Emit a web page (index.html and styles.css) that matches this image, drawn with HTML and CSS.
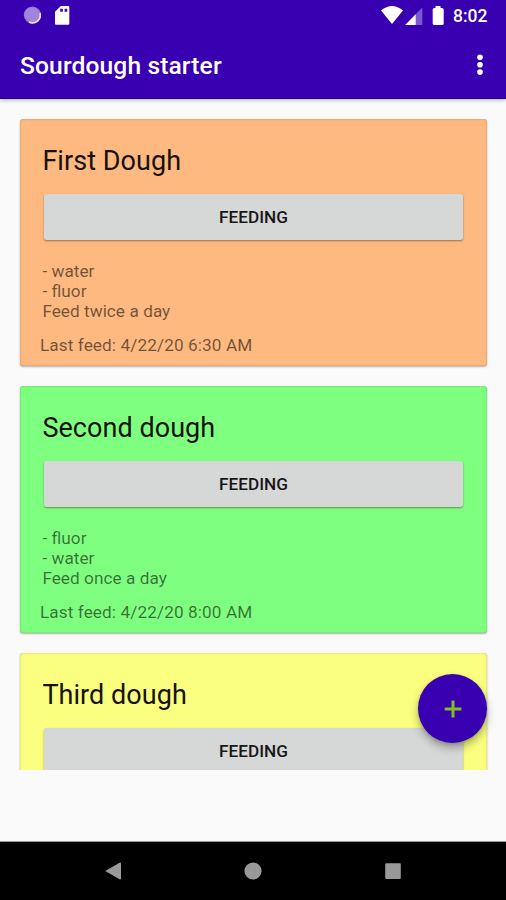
FILE: index.html
```html
<!DOCTYPE html>
<html lang="en">
<head>
<meta charset="utf-8">
<title>Sourdough starter</title>
<link rel="stylesheet" href="styles.css">
</head>
<body>
<div class="screen">
  <header class="header">
    <div class="status">
      <svg class="status-left" width="60" height="32" viewBox="0 0 60 32">
        <circle cx="12.4" cy="15" r="8.6" fill="#9a79d8"/>
        <circle cx="12" cy="14.6" r="7" fill="#a384dc"/>
        <path d="M20 13A7.8 7.8 0 0 1 9 22" fill="none" stroke="#eee4fb" stroke-width="1.7"/>
        <path fill-rule="evenodd" d="M40.8 6H48Q49.3 6 49.3 7.3V23.5Q49.3 24.8 48 24.8H36.3Q35 24.8 35 23.5V11.8ZM40.2 8.7V11.8H42.8V8.7ZM44.6 8.7V11.8H47.2V8.7Z" fill="#fff"/>
      </svg>
      <svg class="status-right" width="66" height="32" viewBox="0 0 66 32">
        <path d="M1 10.5Q12 1.5 23 10.5L12 24Z" fill="#fff"/>
        <path d="M42.3 7.5V25H25.2Z" fill="#7d55cf"/>
        <path d="M35.7 14.2V25H25.2Z" fill="#fff"/>
        <path d="M55.5 6H60.5V8H62Q63.7 8 63.7 9.5V23.5Q63.7 25 62.2 25H54.2Q52.7 25 52.7 23.5V9.5Q52.7 8 54.2 8H55.5Z" fill="#fff"/>
      </svg>
      <span class="clock">8:02</span>
    </div>
    <div class="toolbar">
      <h1 class="app-title">Sourdough starter</h1>
      <svg width="8" height="24" viewBox="0 0 8 24"><g fill="#fff"><circle cx="4" cy="3.3" r="2.8"/><circle cx="4" cy="10.7" r="2.8"/><circle cx="4" cy="18.1" r="2.8"/></g></svg>
    </div>
  </header>
  <main class="list">
    <section class="card orange">
      <h2 class="name">First Dough</h2>
      <button class="feeding">FEEDING</button>
      <p class="notes">- water<br>- fluor<br>Feed twice a day</p>
      <p class="last">Last feed: 4/22/20 6:30 AM</p>
    </section>
    <section class="card green">
      <h2 class="name">Second dough</h2>
      <button class="feeding">FEEDING</button>
      <p class="notes">- fluor<br>- water<br>Feed once a day</p>
      <p class="last">Last feed: 4/22/20 8:00 AM</p>
    </section>
    <section class="card yellow">
      <h2 class="name">Third dough</h2>
      <button class="feeding">FEEDING</button>
    </section>
  </main>
  <button class="fab" aria-label="Add"><svg width="18" height="18" viewBox="0 0 18 18"><path d="M9 .6V17.4M.6 9H17.4" stroke="#83bd22" stroke-width="3"/></svg></button>
  <nav class="nav">
    <svg width="18" height="20" viewBox="0 0 18 20"><path d="M1.2 10L16 1.6Q17 1.4 17 2.2V17.8Q17 18.6 16 18.4Z" fill="#999"/></svg>
    <svg width="18" height="20" viewBox="0 0 18 20"><circle cx="9" cy="10" r="8.6" fill="#999"/></svg>
    <svg width="18" height="20" viewBox="0 0 18 20"><rect x="1.2" y="2.2" width="15.6" height="15.8" rx="1" fill="#999"/></svg>
  </nav>
</div>
</body>
</html>
```
FILE: styles.css
```css
* { box-sizing: border-box; }
body { margin: 0; font-family: Roboto, "Liberation Sans", sans-serif; }
h1, h2, p { margin: 0; }
.screen {
  position: relative;
  display: flex;
  flex-direction: column;
  width: 506px;
  height: 900px;
  background: #fafafa;
  overflow: hidden;
}
.header {
  flex: none;
  height: 99px;
  background: #3900b1;
  border-bottom: 1px solid #24009c;
  box-shadow: 0 1px 4px rgba(0, 0, 0, .3);
}
.status {
  display: flex;
  align-items: center;
  height: 32px;
  padding: 0 18px 0 20px;
  color: #fff;
}
.status-right { margin-left: auto; }
.clock { width: 35px; margin-left: 7px; font-size: 17.5px; font-weight: 500; white-space: nowrap; }
.toolbar {
  display: flex;
  align-items: center;
  justify-content: space-between;
  height: 67px;
  padding: 1px 22.5px 0 20px;
}
.app-title { color: #fff; font-size: 24.6px; font-weight: 500; line-height: 30px; letter-spacing: .12px; }
.list {
  display: flex;
  flex-direction: column;
  gap: 20px;
  height: 671px;
  padding: 20px 19px 0 20px;
  overflow: hidden;
}
.card {
  flex: none;
  height: 247.2px;
  padding: 26px 24.5px 0 22.4px;
  border-radius: 3px;
  box-shadow: 0 1px 2px rgba(0, 0, 0, .3), inset 0 0 2px rgba(0, 0, 0, .25);
}
.orange { background: #fdb97f; }
.green { background: #7fff7f; }
.yellow { background: #faff7f; }
.name { height: 32px; font-size: 27px; font-weight: 400; line-height: 32px; letter-spacing: .05px; color: #17110b; }
.feeding {
  display: block;
  width: 419px;
  height: 45.5px;
  margin: 17px 0 0 1.6px;
  padding: 0;
  border: 0;
  border-radius: 2.5px;
  background: #d6d7d7;
  box-shadow: 0 1px 2px rgba(0, 0, 0, .4);
  color: #161717;
  font: 500 17.2px/46px Roboto, "Liberation Sans", sans-serif;
}
.notes, .last { font-size: 17.2px; line-height: 20.2px; color: rgba(0, 0, 0, .56); }
.notes { margin-top: 21px; word-spacing: .2px; }
.last { margin: 13.5px 0 0 -2.5px; letter-spacing: .1px; }
.fab {
  position: absolute;
  left: 418px;
  top: 674px;
  display: flex;
  align-items: center;
  justify-content: center;
  width: 69px;
  height: 69px;
  padding: 0;
  border: 0;
  border-radius: 50%;
  background: #3900b1;
  box-shadow: 0 5px 9px rgba(0, 0, 0, .3), 0 1px 3px rgba(0, 0, 0, .15);
}
.nav {
  display: flex;
  align-items: center;
  justify-content: space-between;
  height: 58px;
  margin-top: auto;
  padding: 0 104px;
  background: #000;
  box-shadow: 0 -1px 0 #999;
}
```
